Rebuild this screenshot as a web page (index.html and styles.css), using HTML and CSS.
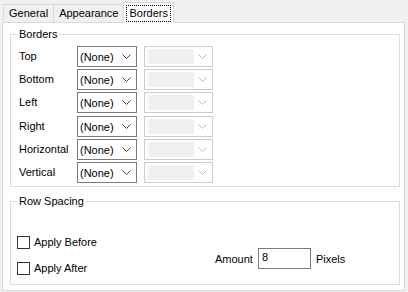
FILE: index.html
```html
<!DOCTYPE html>
<html>
<head>
<meta charset="utf-8">
<link rel="stylesheet" href="styles.css">
</head>
<body>
<div class="window">
  <div class="tabs">
    <div class="tab">General</div>
    <div class="tab">Appearance</div>
    <div class="tab selected"><span class="focus">Borders</span></div>
  </div>
  <div class="panel">
    <fieldset class="group borders">
      <legend>Borders</legend>
      <div class="rows">
        <div class="row"><span class="lbl">Top</span><div class="combo"><span>(None)</span><svg class="chev" width="9" height="5" viewBox="0 0 9 5"><path d="M0.5 0.5 L4.5 4.5 L8.5 0.5" fill="none" stroke="#444" stroke-width="1"/></svg></div><div class="combo disabled"><span class="inner"></span><svg class="chev" width="9" height="5" viewBox="0 0 9 5"><path d="M0.5 0.5 L4.5 4.5 L8.5 0.5" fill="none" stroke="#bbb" stroke-width="1"/></svg></div></div>
        <div class="row"><span class="lbl">Bottom</span><div class="combo"><span>(None)</span><svg class="chev" width="9" height="5" viewBox="0 0 9 5"><path d="M0.5 0.5 L4.5 4.5 L8.5 0.5" fill="none" stroke="#444" stroke-width="1"/></svg></div><div class="combo disabled"><span class="inner"></span><svg class="chev" width="9" height="5" viewBox="0 0 9 5"><path d="M0.5 0.5 L4.5 4.5 L8.5 0.5" fill="none" stroke="#bbb" stroke-width="1"/></svg></div></div>
        <div class="row"><span class="lbl">Left</span><div class="combo"><span>(None)</span><svg class="chev" width="9" height="5" viewBox="0 0 9 5"><path d="M0.5 0.5 L4.5 4.5 L8.5 0.5" fill="none" stroke="#444" stroke-width="1"/></svg></div><div class="combo disabled"><span class="inner"></span><svg class="chev" width="9" height="5" viewBox="0 0 9 5"><path d="M0.5 0.5 L4.5 4.5 L8.5 0.5" fill="none" stroke="#bbb" stroke-width="1"/></svg></div></div>
        <div class="row gap1"><span class="lbl">Right</span><div class="combo"><span>(None)</span><svg class="chev" width="9" height="5" viewBox="0 0 9 5"><path d="M0.5 0.5 L4.5 4.5 L8.5 0.5" fill="none" stroke="#444" stroke-width="1"/></svg></div><div class="combo disabled"><span class="inner"></span><svg class="chev" width="9" height="5" viewBox="0 0 9 5"><path d="M0.5 0.5 L4.5 4.5 L8.5 0.5" fill="none" stroke="#bbb" stroke-width="1"/></svg></div></div>
        <div class="row"><span class="lbl">Horizontal</span><div class="combo"><span>(None)</span><svg class="chev" width="9" height="5" viewBox="0 0 9 5"><path d="M0.5 0.5 L4.5 4.5 L8.5 0.5" fill="none" stroke="#444" stroke-width="1"/></svg></div><div class="combo disabled"><span class="inner"></span><svg class="chev" width="9" height="5" viewBox="0 0 9 5"><path d="M0.5 0.5 L4.5 4.5 L8.5 0.5" fill="none" stroke="#bbb" stroke-width="1"/></svg></div></div>
        <div class="row"><span class="lbl">Vertical</span><div class="combo"><span>(None)</span><svg class="chev" width="9" height="5" viewBox="0 0 9 5"><path d="M0.5 0.5 L4.5 4.5 L8.5 0.5" fill="none" stroke="#444" stroke-width="1"/></svg></div><div class="combo disabled"><span class="inner"></span><svg class="chev" width="9" height="5" viewBox="0 0 9 5"><path d="M0.5 0.5 L4.5 4.5 L8.5 0.5" fill="none" stroke="#bbb" stroke-width="1"/></svg></div></div>
      </div>
    </fieldset>
    <fieldset class="group spacing">
      <legend>Row Spacing</legend>
      <div class="spacing-body">
        <div class="checks">
          <div class="check"><span class="box"></span><span>Apply Before</span></div>
          <div class="check"><span class="box"></span><span>Apply After</span></div>
        </div>
        <div class="amount">
          <span>Amount</span>
          <div class="textbox">8</div>
          <span>Pixels</span>
        </div>
      </div>
    </fieldset>
  </div>
</div>
</body>
</html>
```
FILE: styles.css
```css
html, body {
  margin: 0;
  padding: 0;
  background: #f0f0f0;
  font-family: "Liberation Sans", Arial, sans-serif;
  font-size: 11px;
  color: #000;
}
.window {
  width: 408px;
  height: 292px;
  overflow: hidden;
}
.tabs {
  display: flex;
  align-items: flex-end;
  height: 22px;
  padding-left: 3px;
  box-sizing: border-box;
}
.tab {
  height: 18px;
  box-sizing: border-box;
  border: 1px solid #d9d9d9;
  border-bottom: none;
  border-right: none;
  padding: 0 5px;
  line-height: 17px;
  background: #f0f0f0;
}
.tab + .tab.selected {
  border-right: 1px solid #d9d9d9;
}
.tab.selected {
  height: 21px;
  margin-bottom: -1px;
  background: #fff;
  padding: 2px 2px 0 2px;
  position: relative;
  z-index: 1;
}
.focus {
  display: block;
  border: 1px dotted #000;
  padding: 0 2px;
  line-height: 15px;
}
.panel {
  margin-left: 2px;
  width: 403px;
  height: 269px;
  box-sizing: border-box;
  border: 1px solid #d9d9d9;
  background: #fff;
  padding: 5px 4px 0 7px;
}
.group {
  margin: 0;
  border: 1px solid #dcdcdc;
  padding: 0;
}
.group legend {
  padding: 0 2px;
  margin-left: 6px;
  line-height: 13px;
}
.borders {
  height: 159px;
  box-sizing: border-box;
}
.rows {
  display: flex;
  flex-direction: column;
  gap: 2px;
  padding: 5px 0 0 8px;
}
.row {
  display: flex;
  align-items: center;
  height: 21px;
}
.row.gap1 {
  margin-top: 1px;
}
.lbl {
  width: 58px;
  position: relative;
  top: -1px;
}
.combo {
  width: 60px;
  height: 21px;
  box-sizing: border-box;
  border: 1px solid #7a7a7a;
  background: #fff;
  display: flex;
  align-items: center;
  justify-content: space-between;
  padding: 0 5px 0 2px;
}
.combo.disabled {
  width: 69px;
  margin-left: 7px;
  border-color: #cccccc;
  padding: 2px 5px 2px 3px;
}
.combo .inner {
  width: 46px;
  height: 15px;
  background: #f0f0f0;
}
.spacing {
  margin-top: 8px;
  height: 90px;
  box-sizing: border-box;
}
.spacing-body {
  display: flex;
  align-items: flex-end;
  padding: 27px 0 0 6px;
}
.checks {
  display: flex;
  flex-direction: column;
  gap: 12px;
}
.check {
  display: flex;
  align-items: center;
  gap: 4px;
  height: 14px;
}
.box {
  width: 13px;
  height: 13px;
  box-sizing: border-box;
  border: 1px solid #333;
  background: #fff;
}
.amount {
  display: flex;
  align-items: center;
  margin-left: 118px;
  margin-bottom: 6px;
}
.textbox {
  width: 53px;
  height: 21px;
  box-sizing: border-box;
  border: 1px solid #7a7a7a;
  margin: 0 5px 0 5px;
  padding: 1px 3px;
  line-height: 15px;
}
```
